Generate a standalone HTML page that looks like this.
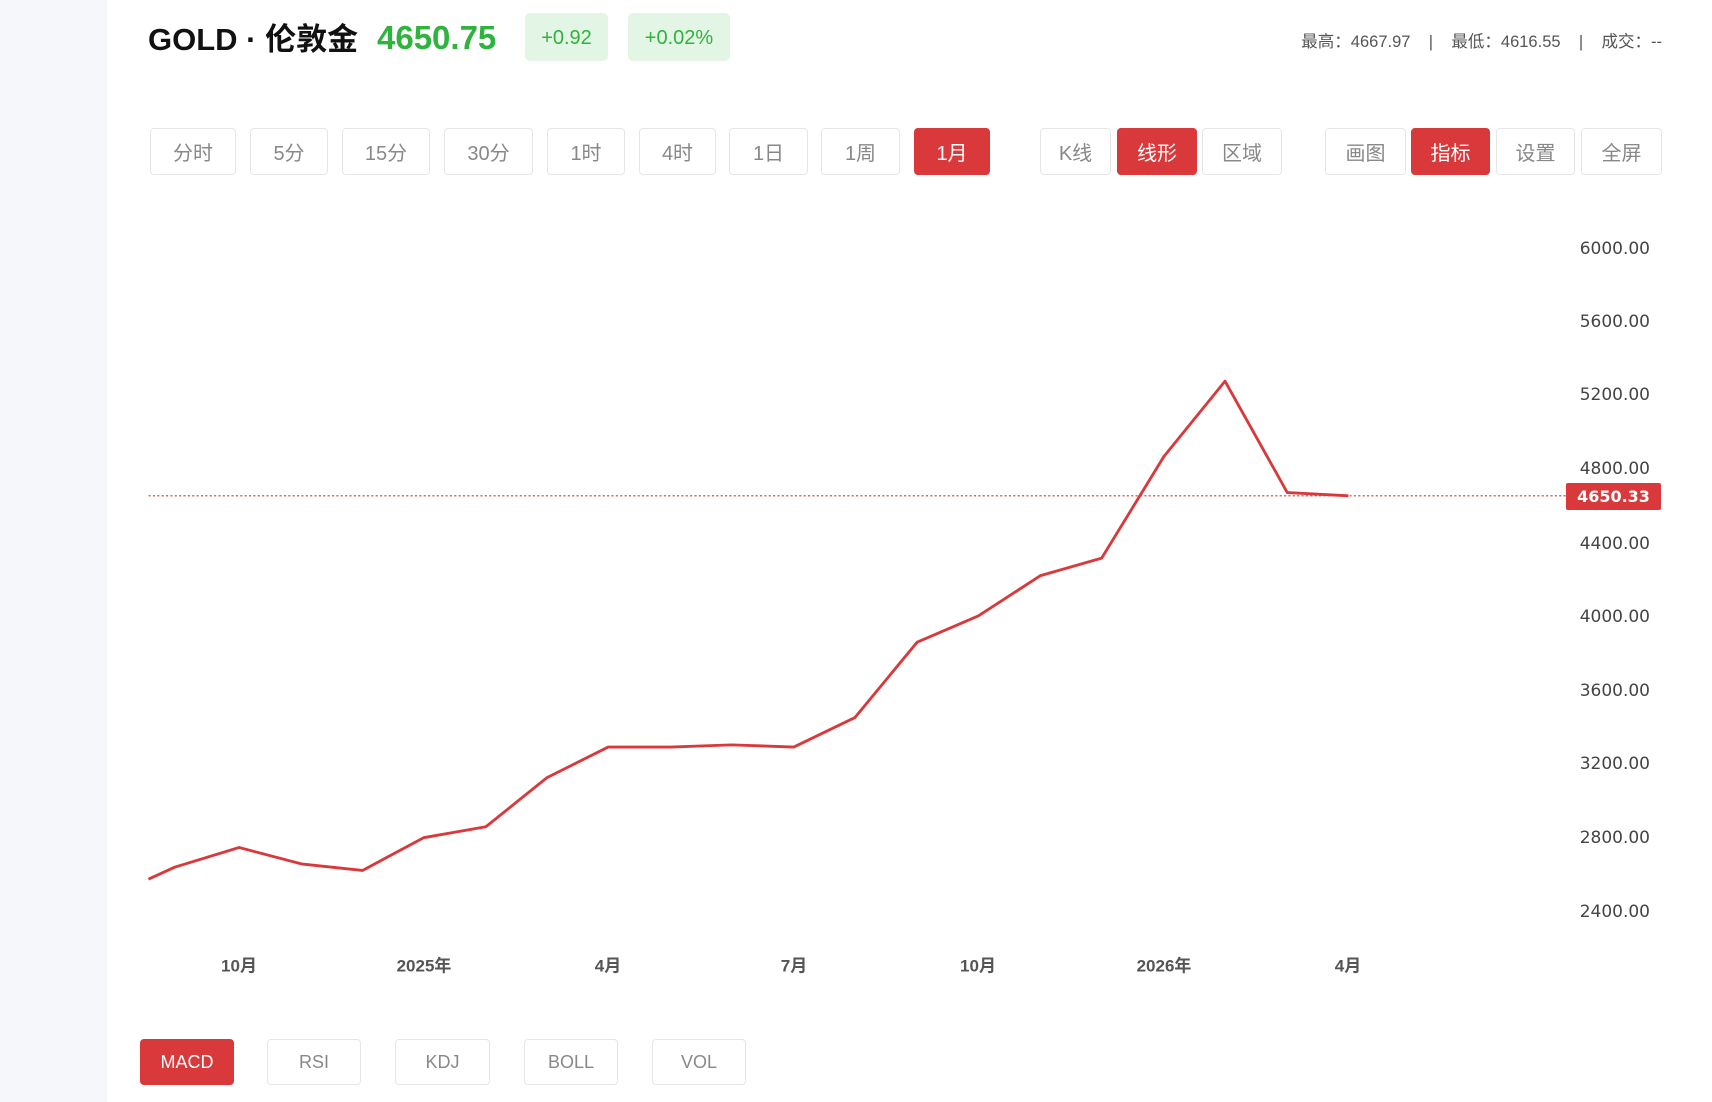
<!DOCTYPE html>
<html><head><meta charset="utf-8"><style>
*{margin:0;padding:0;box-sizing:border-box}
body{width:1712px;height:1102px;background:#fff;position:relative;overflow:hidden;font-family:"Liberation Sans","Noto Sans CJK SC",sans-serif}
.side{position:absolute;left:0;top:0;width:107px;height:1102px;background:#f5f7fa}
.a{position:absolute;white-space:nowrap}
.btn{position:absolute;border:1px solid #e6e6e6;border-radius:4px;background:#fff;color:#888;display:flex;align-items:center;justify-content:center;font-size:20px}
.on{background:#d9393b;border-color:#d9393b;color:#fff}
.y{position:absolute;right:62px;font-size:17px;color:#444;font-family:"DejaVu Sans",sans-serif;transform:translateY(-50%)}
.x{position:absolute;font-size:17px;color:#555;font-weight:bold;transform:translate(-50%,-50%)}
</style></head><body>
<div class="side"></div>
<div class="a" style="left:148px;top:14px;font-size:31px;font-weight:bold;color:#111">GOLD · 伦敦金</div>
<div class="a" style="left:377px;top:19px;font-size:33px;font-weight:bold;color:#2eb33d">4650.75</div>
<div class="a" style="left:525px;top:13px;width:83px;height:48px;background:#e3f5e4;border-radius:5px;color:#2eb33d;font-size:20px;display:flex;align-items:center;justify-content:center;padding-top:2px">+0.92</div>
<div class="a" style="left:628px;top:13px;width:102px;height:48px;background:#e3f5e4;border-radius:5px;color:#2eb33d;font-size:20px;display:flex;align-items:center;justify-content:center;padding-top:2px">+0.02%</div>
<div class="a" style="right:50px;top:28px;font-size:16.5px;color:#555">最高：4667.97 &nbsp;&nbsp;&nbsp;| &nbsp;&nbsp;&nbsp;最低：4616.55 &nbsp;&nbsp;&nbsp;| &nbsp;&nbsp;&nbsp;成交：--</div>

<div class="btn" style="left:150px;top:128px;width:86px;height:47px">分时</div>
<div class="btn" style="left:250px;top:128px;width:78px;height:47px">5分</div>
<div class="btn" style="left:342px;top:128px;width:88px;height:47px">15分</div>
<div class="btn" style="left:444px;top:128px;width:89px;height:47px">30分</div>
<div class="btn" style="left:547px;top:128px;width:78px;height:47px">1时</div>
<div class="btn" style="left:639px;top:128px;width:77px;height:47px">4时</div>
<div class="btn" style="left:729px;top:128px;width:79px;height:47px">1日</div>
<div class="btn" style="left:821px;top:128px;width:79px;height:47px">1周</div>
<div class="btn on" style="left:914px;top:128px;width:76px;height:47px">1月</div>
<div class="btn" style="left:1040px;top:128px;width:71px;height:47px">K线</div>
<div class="btn on" style="left:1117px;top:128px;width:80px;height:47px">线形</div>
<div class="btn" style="left:1202px;top:128px;width:80px;height:47px">区域</div>
<div class="btn" style="left:1325px;top:128px;width:81px;height:47px">画图</div>
<div class="btn on" style="left:1411px;top:128px;width:79px;height:47px">指标</div>
<div class="btn" style="left:1496px;top:128px;width:79px;height:47px">设置</div>
<div class="btn" style="left:1581px;top:128px;width:81px;height:47px">全屏</div>

<div class="y" style="top:249px">6000.00</div>
<div class="y" style="top:322px">5600.00</div>
<div class="y" style="top:395px">5200.00</div>
<div class="y" style="top:469px">4800.00</div>
<div class="y" style="top:544px">4400.00</div>
<div class="y" style="top:617px">4000.00</div>
<div class="y" style="top:691px">3600.00</div>
<div class="y" style="top:764px">3200.00</div>
<div class="y" style="top:838px">2800.00</div>
<div class="y" style="top:912px">2400.00</div>

<svg class="a" style="left:0;top:0" width="1712" height="1102" viewBox="0 0 1568 1009" preserveAspectRatio="none">
<line x1="136" y1="454" x2="1434" y2="454" stroke="#d9393b" stroke-width="1" stroke-dasharray="2,2"/>
<polyline fill="none" stroke="#d9393b" stroke-width="2.6" stroke-linejoin="round" points="136,805 160,794 219,776 276,791 332,797 388,767 445,757 501,712 557,684 614,684 670,682 727,684 783,657 840,588 896,564 953,527 1009,511 1066,418 1122,349 1179,451 1235,454"/>
</svg>
<div class="a" style="left:1566px;top:483px;width:95px;height:27px;background:#d9393b;border-radius:2px;color:#fff;font-weight:bold;font-size:16px;font-family:'DejaVu Sans',sans-serif;display:flex;align-items:center;justify-content:center">4650.33</div>

<div class="x" style="left:239px;top:964px">10月</div>
<div class="x" style="left:424px;top:964px">2025年</div>
<div class="x" style="left:608px;top:964px">4月</div>
<div class="x" style="left:794px;top:964px">7月</div>
<div class="x" style="left:978px;top:964px">10月</div>
<div class="x" style="left:1164px;top:964px">2026年</div>
<div class="x" style="left:1348px;top:964px">4月</div>

<div class="btn on" style="left:140px;top:1039px;width:94px;height:46px;font-size:18px">MACD</div>
<div class="btn" style="left:267px;top:1039px;width:94px;height:46px;font-size:18px">RSI</div>
<div class="btn" style="left:395px;top:1039px;width:95px;height:46px;font-size:18px">KDJ</div>
<div class="btn" style="left:524px;top:1039px;width:94px;height:46px;font-size:18px">BOLL</div>
<div class="btn" style="left:652px;top:1039px;width:94px;height:46px;font-size:18px">VOL</div>
</body></html>
